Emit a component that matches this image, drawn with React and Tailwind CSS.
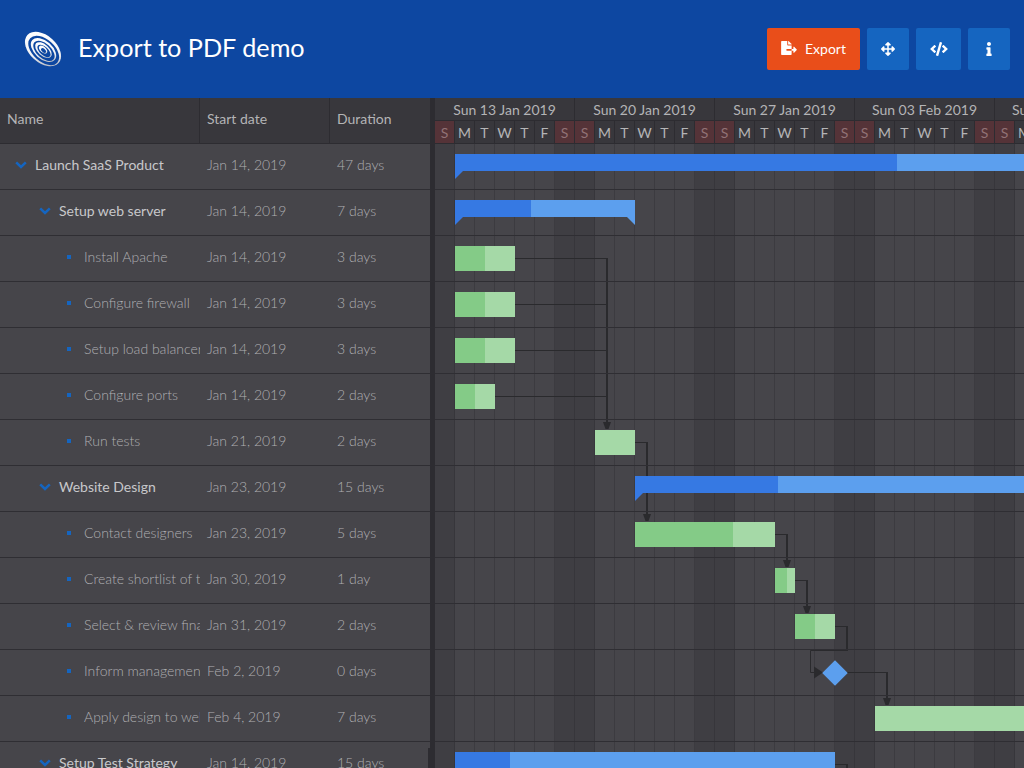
import React from "react";
import { FaFileExport, FaArrowsAlt, FaCode, FaInfo } from "react-icons/fa";

const rows = [
  { n: "Launch SaaS Product", d: "Jan 14, 2019", u: "47 days", l: 0, t: "p", x: 20, w: 700, p: 442 },
  { n: "Setup web server", d: "Jan 14, 2019", u: "7 days", l: 1, t: "p", x: 20, w: 180, p: 76, end: true },
  { n: "Install Apache", d: "Jan 14, 2019", u: "3 days", l: 2, t: "t", x: 20, w: 60, p: 30 },
  { n: "Configure firewall", d: "Jan 14, 2019", u: "3 days", l: 2, t: "t", x: 20, w: 60, p: 30 },
  { n: "Setup load balancer", d: "Jan 14, 2019", u: "3 days", l: 2, t: "t", x: 20, w: 60, p: 30 },
  { n: "Configure ports", d: "Jan 14, 2019", u: "2 days", l: 2, t: "t", x: 20, w: 40, p: 20 },
  { n: "Run tests", d: "Jan 21, 2019", u: "2 days", l: 2, t: "t", x: 160, w: 40, p: 0 },
  { n: "Website Design", d: "Jan 23, 2019", u: "15 days", l: 1, t: "p", x: 200, w: 500, p: 143 },
  { n: "Contact designers", d: "Jan 23, 2019", u: "5 days", l: 2, t: "t", x: 200, w: 140, p: 98 },
  { n: "Create shortlist of three designers", d: "Jan 30, 2019", u: "1 day", l: 2, t: "t", x: 340, w: 20, p: 12 },
  { n: "Select & review final design", d: "Jan 31, 2019", u: "2 days", l: 2, t: "t", x: 360, w: 40, p: 20 },
  { n: "Inform management about decision", d: "Feb 2, 2019", u: "0 days", l: 2, t: "m", x: 400 },
  { n: "Apply design to web site", d: "Feb 4, 2019", u: "7 days", l: 2, t: "t", x: 440, w: 300, p: 0 },
  { n: "Setup Test Strategy", d: "Jan 14, 2019", u: "15 days", l: 1, t: "p", x: 20, w: 380, p: 55 },
];

const letters = ["S", "M", "T", "W", "T", "F", "S"];
const days = Array.from({ length: 30 }, (_, i) => i);
const weeks = ["Sun 13 Jan 2019", "Sun 20 Jan 2019", "Sun 27 Jan 2019", "Sun 03 Feb 2019", "Sun 10 Feb 2019"];

function Logo() {
  return (
    <svg width="38" height="38" viewBox="0 0 38 38" className="shrink-0">
      <defs>
        <linearGradient id="lg" x1="0" y1="0.2" x2="1" y2="0.8">
          <stop offset="0" stopColor="#ffffff" />
          <stop offset="0.65" stopColor="#f0f2f6" />
          <stop offset="1" stopColor="#a9aeb8" />
        </linearGradient>
      </defs>
      <g transform="rotate(42 19 19)">
        <ellipse cx="19" cy="19" rx="21" ry="13.5" fill="url(#lg)" />
        <ellipse cx="20.5" cy="19.6" rx="18.2" ry="11" fill="#0d47a1" />
        <ellipse cx="20" cy="19.4" rx="15" ry="9" fill="url(#lg)" />
        <ellipse cx="21" cy="19.8" rx="12.8" ry="7.2" fill="#0d47a1" />
        <ellipse cx="20" cy="19.5" rx="10" ry="5.6" fill="url(#lg)" />
        <ellipse cx="21" cy="19.8" rx="8" ry="4.2" fill="#0d47a1" />
        <ellipse cx="19.5" cy="19.4" rx="5" ry="3" fill="url(#lg)" />
        <ellipse cx="20.5" cy="19.8" rx="3" ry="1.7" fill="#0d47a1" />
      </g>
    </svg>
  );
}

function Chevron() {
  return (
    <svg width="12" height="8" viewBox="0 0 12 8" className="block">
      <path d="M1.2 1.4L6 6L10.8 1.4" fill="none" stroke="#1565c0" strokeWidth="2.5" />
    </svg>
  );
}

function Bar({ r }) {
  if (r.t === "m") {
    return <div className="absolute top-[14px] w-[18px] h-[18px] rotate-45 bg-[#5c9fee]" style={{ left: r.x - 9 }} />;
  }
  if (r.t === "t") {
    return (
      <div className="absolute top-[10px] h-[25px] bg-[#a5d9a7]" style={{ left: r.x, width: r.w }}>
        <div className="h-full bg-[#84cb87]" style={{ width: r.p }} />
      </div>
    );
  }
  return (
    <div className="absolute top-[10px] h-[17px] bg-[#5c9fee]" style={{ left: r.x, width: r.w }}>
      <div className="h-full bg-[#3679e3]" style={{ width: r.p }} />
      <div className="absolute left-0 top-[17px] w-0 h-0 border-t-[8px] border-r-[8px] border-t-[#3679e3] border-r-transparent" />
      {r.end && (
        <div className="absolute right-0 top-[17px] w-0 h-0 border-t-[8px] border-l-[8px] border-t-[#5c9fee] border-l-transparent" />
      )}
    </div>
  );
}

function Head({ children, className }) {
  return (
    <div className={"flex items-center pl-[7px] pb-[4px] border-r border-[#2d2c31] text-[14px] text-[#b4b4b6] " + className}>
      {children}
    </div>
  );
}

function Lines() {
  const c = "#2a2a2d";
  const thin = [
    "M80 258.5H171",
    "M80 304.5H171",
    "M80 350.5H171",
    "M60 396.5H171",
    "M200 442.5H211",
    "M340 534.5H351",
    "M360 580.5H371",
    "M400 626.5H411",
    "M412 650.5H375.5V672.5H380",
    "M412 672.5H451",
    "M400 764.5H411",
  ];
  const vert = [
    [171, 258, 424],
    [211, 442, 516],
    [351, 534, 562],
    [371, 580, 608],
    [411, 626, 651],
    [451, 672, 700],
    [411, 764, 768],
  ];
  const heads = [
    [172, 430],
    [212, 522],
    [352, 568],
    [372, 614],
    [452, 706],
  ];
  return (
    <g>
      {thin.map((d, i) => <path key={i} d={d} fill="none" stroke={c} strokeWidth="1" />)}
      {vert.map(([x, a, b], i) => <rect key={i} x={x} y={a} width="2" height={b - a} fill={c} />)}
      {heads.map(([x, y], i) => (
        <path key={i} d={`M${x - 4} ${y - 8}H${x + 4}L${x + 1.5} ${y - 1}H${x - 1.5}Z`} fill={c} />
      ))}
      <path d="M379 666.5L388 672.5L379 678.5Z" fill={c} />
    </g>
  );
}

export default function App() {
  return (
    <div className="h-[768px] w-[1024px] overflow-hidden flex flex-col bg-[#46454a] font-['Lato',sans-serif]">
      <header className="h-[98px] shrink-0 flex items-center bg-[#0d47a1] pl-[24px] pr-[14px]">
        <Logo />
        <h1 className="ml-[16px] mb-[3px] text-[25.2px] leading-none text-white">Export to PDF demo</h1>
        <div className="ml-auto flex gap-[7px] h-[42px] text-white">
          <button className="w-[93px] pb-[2px] rounded-[2px] bg-[#e94e1a] flex items-center justify-center gap-[8px] text-[14px]">
            <FaFileExport className="w-[16px] h-[14px]" />
            Export
          </button>
          <button className="w-[42px] rounded-[2px] bg-[#1565c0] flex items-center justify-center">
            <FaArrowsAlt className="w-[14px] h-[14px]" />
          </button>
          <button className="w-[45px] rounded-[2px] bg-[#1565c0] flex items-center justify-center">
            <FaCode className="w-[18px] h-[14px]" />
          </button>
          <button className="w-[42px] rounded-[2px] bg-[#1565c0] flex items-center justify-center">
            <FaInfo className="w-[14px] h-[14px]" />
          </button>
        </div>
      </header>

      <div className="flex-1 flex min-h-0">
        <div className="w-[430px] shrink-0 flex flex-col">
          <div className="h-[46px] shrink-0 flex bg-[#38373c] border-b border-[#2d2c31]">
            <Head className="w-[200px]">Name</Head>
            <Head className="w-[130px]">Start date</Head>
            <Head className="w-[100px] border-r-0">Duration</Head>
          </div>
          {rows.map((r) => (
            <div key={r.n} className="h-[46px] shrink-0 flex items-center border-b border-[#2f2e33] text-[14px] text-[#afafb2] font-light">
              <div className="w-[200px] shrink-0 overflow-hidden whitespace-nowrap flex items-center h-full pb-[4px]">
                {r.l === 0 && <div className="w-[35px] shrink-0 pl-[15px]"><Chevron /></div>}
                {r.l === 1 && <div className="w-[59px] shrink-0 pl-[39px]"><Chevron /></div>}
                {r.l === 2 && (
                  <div className="w-[84px] shrink-0 pl-[67px]">
                    <div className="w-[4px] h-[4px] bg-[#1565c0]" />
                  </div>
                )}
                <span className={r.l < 2 ? "text-[#c8c8ca] font-normal" : ""}>{r.n}</span>
              </div>
              <div className="w-[130px] shrink-0 pl-[7px] pb-[4px]">{r.d}</div>
              <div className="w-[100px] shrink-0 pl-[7px] pb-[4px]">{r.u}</div>
            </div>
          ))}
        </div>

        <div className="relative w-[5px] shrink-0 bg-[#2d2c31]">
          <div className="absolute left-[-2px] top-[650px] w-[7px] h-[40px] bg-[#2d2c31]" />
        </div>

        <div className="flex-1 min-w-0 relative overflow-hidden flex flex-col">
          <div className="h-[46px] shrink-0 w-[700px] flex flex-col bg-[#38373c] border-b border-[#2d2c31]">
            <div className="h-[23px] shrink-0 flex border-b border-[#2d2c31]">
              {weeks.map((w) => (
                <div key={w} className="w-[140px] shrink-0 flex items-center justify-center border-r border-[#2d2c31] text-[14px] text-[#b4b4b6] whitespace-nowrap">{w}</div>
              ))}
            </div>
            <div className="flex flex-1">
              {days.map((i) => {
                const we = i % 7 === 0 || i % 7 === 6;
                return (
                  <div
                    key={i}
                    className={
                      "w-[20px] shrink-0 flex items-center justify-center border-r border-[#2d2c31] text-[14px] " +
                      (we ? "bg-[#553338] text-[#927276]" : "text-[#b4b4b6]")
                    }
                  >
                    {letters[i % 7]}
                  </div>
                );
              })}
            </div>
          </div>

          <div className="relative flex-1">
            <div className="absolute inset-0 flex w-[600px]">
              {days.map((i) => {
                const we = i % 7 === 0 || i % 7 === 6;
                return (
                  <div
                    key={i}
                    className={"w-[20px] shrink-0 h-full border-r " + (we ? "bg-[#3f3e43] border-[#37363b]" : "bg-[#46454a] border-[#3c3b40]")}
                  />
                );
              })}
            </div>
            <svg className="absolute left-0 top-0 pointer-events-none" width="589" height="624" viewBox="0 144 589 624">
              <Lines />
            </svg>
            <div className="absolute inset-0">
              {rows.map((r) => (
                <div key={r.n} className="relative h-[46px] border-b border-[#2f2e33]">
                  <Bar r={r} />
                </div>
              ))}
            </div>
          </div>
        </div>
      </div>
    </div>
  );
}
